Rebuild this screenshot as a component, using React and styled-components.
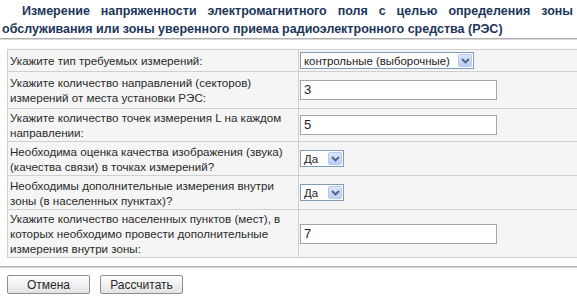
import React from "react";
import styled, { createGlobalStyle } from "styled-components";

const GlobalStyle = createGlobalStyle`
  body {
    margin: 0;
    background: #ffffff;
    overflow: hidden;
  }
`;

const rows = [
  { label: ["Укажите тип требуемых измерений:"], kind: "select", value: "контрольные (выборочные)", wide: true, height: 22 },
  { label: ["Укажите количество направлений (секторов)", "измерений от места установки РЭС:"], kind: "input", value: "3", height: 37 },
  { label: ["Укажите количество точек измерения L на каждом", "направлении:"], kind: "input", value: "5", height: 33 },
  { label: ["Необходима оценка качества изображения (звука)", "(качества связи) в точках измерений?"], kind: "select", value: "Да", height: 34 },
  { label: ["Необходимы дополнительные измерения внутри", "зоны (в населенных пунктах)?"], kind: "select", value: "Да", height: 34 },
  { label: ["Укажите количество населенных пунктов (мест), в", "которых необходимо провести дополнительные", "измерения внутри зоны:"], kind: "input", value: "7", height: 48 },
];

const Arrow = () => (
  <ArrowBox>
    <svg width="9" height="6" viewBox="0 0 9 6">
      <path d="M1 1 L4.5 4.5 L8 1" fill="none" stroke="#4d6185" strokeWidth="1.8" />
    </svg>
  </ArrowBox>
);

const App = () => {
  return (
    <>
      <GlobalStyle />
      <Page>
        <Title>
          Измерение напряженности электромагнитного поля с целью определения зоны
          обслуживания или зоны уверенного приема радиоэлектронного средства (РЭС)
        </Title>
        <Rule />
        <Table>
          <tbody>
            {rows.map((r, i) => (
              <Row key={i} $h={r.height}>
                <Label>
                  {r.label.map((line, j) => (
                    <Line key={j}>{line}</Line>
                  ))}
                </Label>
                <Field>
                  {r.kind === "input" ? (
                    <Input>{r.value}</Input>
                  ) : (
                    <Select $wide={r.wide}>
                      <SelectText>{r.value}</SelectText>
                      <Arrow />
                    </Select>
                  )}
                </Field>
              </Row>
            ))}
          </tbody>
        </Table>
        <Rule $bottom />
        <Buttons>
          <Button>Отмена</Button>
          <Button>Рассчитать</Button>
        </Buttons>
      </Page>
    </>
  );
};

export default App;

const Page = styled.div`
  width: 577px;
  height: 298px;
  font-family: "Liberation Sans", Arial, sans-serif;
`;

const Title = styled.h1`
  margin: 0;
  padding: 2px 4px 0 2px;
  text-indent: 20px;
  text-align: justify;
  font-family: "Liberation Sans", Arial, sans-serif;
  font-size: 12.5px;
  font-weight: bold;
  line-height: 18px;
  color: #1c3659;
`;

const Rule = styled.div`
  height: 0;
  margin: ${(p) => (p.$bottom ? "8px 0 7px" : "0 0 9px")};
  border-top: 1px solid #b0b0b0;
  border-bottom: 1px solid #d8d8d8;
`;

const Table = styled.table`
  margin-left: 7px;
  width: 590px;
  border-collapse: collapse;
  border: 1px solid #cfcfcf;
`;

const Row = styled.tr`
  height: ${(p) => p.$h}px;
  background: #f5f5f5;
  border-bottom: 1px solid #cfcfcf;
`;

const Label = styled.td`
  width: 285px;
  padding: 1px 3px 1px 2px;
  font-size: 11.6px;
  line-height: 15px;
  color: #2a2a2a;
  vertical-align: middle;
  border-right: 1px solid #cfcfcf;
`;

const Line = styled.div`
  white-space: nowrap;
`;

const Field = styled.td`
  padding: 0 0 0 1px;
  vertical-align: middle;
`;

const Input = styled.div`
  box-sizing: border-box;
  width: 197px;
  height: 20px;
  background: #ffffff;
  border: 1px solid #a5a5a5;
  padding: 0 3px;
  font-size: 13px;
  line-height: 18px;
  color: #222;
`;

const Select = styled.div`
  box-sizing: border-box;
  display: flex;
  align-items: center;
  justify-content: space-between;
  width: ${(p) => (p.$wide ? "174px" : "44px")};
  height: 17px;
  background: #ffffff;
  border: 1px solid #7f9db9;
  padding: 0 1px 0 3px;
`;

const SelectText = styled.span`
  font-size: 11.4px;
  color: #222;
  white-space: nowrap;
`;

const ArrowBox = styled.span`
  display: flex;
  align-items: center;
  justify-content: center;
  width: 14px;
  height: 13px;
  background: linear-gradient(#dbe6fb, #b9cdf5);
  border: 1px solid #b8caf0;
  border-radius: 2px;
  box-sizing: border-box;
`;

const Buttons = styled.div`
  display: flex;
  gap: 10px;
  padding-left: 7px;
`;

const Button = styled.button`
  box-sizing: border-box;
  height: 19px;
  width: 83px;
  padding: 0;
  font-family: "Liberation Sans", Arial, sans-serif;
  font-size: 12px;
  color: #2a2a2a;
  background: linear-gradient(#ffffff, #e2e2e2);
  border: 1px solid #8f8f8f;
  border-radius: 2px;
`;
